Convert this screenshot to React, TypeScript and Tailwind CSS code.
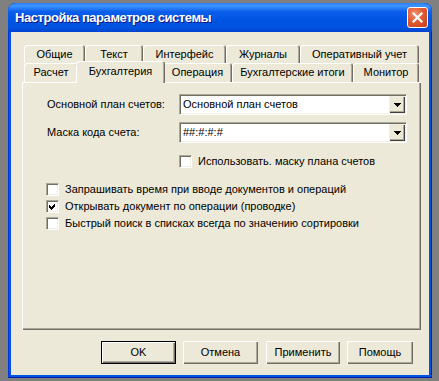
import React from 'react';

const font = { fontFamily: '"Liberation Sans", "DejaVu Sans", sans-serif' };

const tabBevel =
  'bg-[#ece9d8] rounded-t-[3px] shadow-[inset_1px_1px_0_#ffffff,inset_-1px_0_0_#716f64,inset_-2px_0_0_#aca899]';

const Tab = ({ label, w, active = false }: { label: string; w: string; active?: boolean }) => (
  <div
    className={`${tabBevel} ${w} flex items-center justify-center text-[11px] text-black ${
      active ? 'relative z-10 -mx-[2px] h-[22px] -mb-[1px] pb-[2px]' : 'h-full'
    }`}
  >
    {label}
  </div>
);

const Combo = ({ value }: { value: string }) => (
  <div className="w-[228px] h-[21px] bg-white flex items-center border border-t-[#aca899] border-l-[#aca899] border-r-white border-b-white shadow-[inset_1px_1px_0_#716f64,inset_-1px_-1px_0_#f1efe2]">
    <span className="flex-1 pl-[3px] text-[11px] text-black leading-none">{value}</span>
    <div className="w-[16px] h-[17px] mr-[1px] bg-[#ece9d8] flex items-center justify-center shadow-[inset_1px_1px_0_#f1efe2,inset_-1px_-1px_0_#404040,inset_-2px_-2px_0_#aca899]">
      <svg width="7" height="4" viewBox="0 0 7 4" shapeRendering="crispEdges">
        <polygon points="0,0 7,0 3.5,4" fill="#000" />
      </svg>
    </div>
  </div>
);

const Check = ({ label, checked = false }: { label: string; checked?: boolean }) => (
  <div className="flex items-center h-[13px]">
    <div className="w-[13px] h-[13px] bg-white border border-t-[#aca899] border-l-[#aca899] border-r-white border-b-white shadow-[inset_1px_1px_0_#716f64,inset_-1px_-1px_0_#f1efe2] flex items-center justify-center">
      {checked && (
        <svg width="11" height="11" viewBox="0 0 11 11" shapeRendering="crispEdges">
          <polygon points="2,4 4,6 8,2 8,5 4,9 2,7" fill="#000" />
        </svg>
      )}
    </div>
    <span className="ml-[6px] text-[11px] text-black">{label}</span>
  </div>
);

const Btn = ({ label, w, def = false }: { label: string; w: string; def?: boolean }) => (
  <div
    className={`${w} h-[23px] flex items-center justify-center text-[11px] text-black bg-[#ece9d8] ${
      def
        ? 'border border-black shadow-[inset_1px_1px_0_#ffffff,inset_-1px_-1px_0_#716f64,inset_-2px_-2px_0_#aca899]'
        : 'shadow-[inset_1px_1px_0_#ffffff,inset_-1px_-1px_0_#716f64,inset_-2px_-2px_0_#aca899]'
    }`}
  >
    {label}
  </div>
);

export default function App() {
  return (
    <div className="w-[439px] h-[381px] bg-[#808080] pt-[3px] pl-[8px]" style={font}>
      <div className="w-[424px] h-[375px] flex flex-col rounded-t-[8px] overflow-hidden bg-[#0054e3] shadow-[inset_1px_0_0_#0831d9,inset_-1px_0_0_#001ea0,inset_0_-1px_0_#001ea0]">
        {/* title bar */}
        <div className="h-[29px] flex items-center pl-[7px] pr-[4px] bg-[linear-gradient(180deg,#2b7cf5_0%,#3d95ff_10%,#0a5eeb_30%,#0054e3_60%,#0052df_85%,#0043cf_100%)]">
          <span className="text-white text-[13px] font-bold tracking-[-0.45px] [text-shadow:1px_1px_0_#0a1883]">
            Настройка параметров системы
          </span>
          <div className="ml-auto w-[21px] h-[21px] rounded-[3px] border border-white bg-[radial-gradient(circle_at_35%_30%,#f0916c_0%,#e25a32_45%,#c4401a_100%)] flex items-center justify-center">
            <svg width="11" height="11" viewBox="0 0 11 11">
              <path d="M1.5 1.5 L9.5 9.5 M9.5 1.5 L1.5 9.5" stroke="#fff" strokeWidth="2.2" strokeLinecap="square" />
            </svg>
          </div>
        </div>

        {/* client area */}
        <div className="flex-1 mx-[3px] mb-[3px] bg-[#ece9d8] flex flex-col pt-[13px] pl-[11px]">
          <div className="w-[399px]">
            <div className="h-[18px] flex pl-[2px]">
              <Tab label="Общие" w="w-[61px]" />
              <Tab label="Текст" w="w-[58px]" />
              <Tab label="Интерфейс" w="w-[83px]" />
              <Tab label="Журналы" w="w-[74px]" />
              <Tab label="Оперативный учет" w="w-[119px]" />
            </div>
            <div className="h-[19px] flex items-end pl-[2px]">
              <div className="h-full flex"><Tab label="Расчет" w="w-[54px]" /></div>
              <Tab label="Бухгалтерия" w="w-[89px]" active />
              <div className="h-full flex">
                <Tab label="Операция" w="w-[69px]" />
                <Tab label="Бухгалтерские итоги" w="w-[121px]" />
                <Tab label="Монитор" w="w-[66px]" />
              </div>
            </div>

            {/* panel */}
            <div className="h-[248px] bg-[#ece9d8] shadow-[inset_1px_1px_0_#ffffff,inset_-1px_-1px_0_#716f64,inset_-2px_-2px_0_#aca899] pt-[12px] pl-[24px] flex flex-col">
              <div className="flex items-center">
                <span className="w-[133px] pl-[1px] text-[11px] text-black">Основной план счетов:</span>
                <Combo value="Основной план счетов" />
              </div>
              <div className="flex items-center mt-[7px]">
                <span className="w-[133px] pl-[1px] text-[11px] text-black">Маска кода счета:</span>
                <Combo value="##:#:#:#" />
              </div>
              <div className="mt-[12px] pl-[133px]">
                <Check label="Использовать. маску плана счетов" />
              </div>
              <div className="mt-[15px] flex flex-col gap-[4px]">
                <Check label="Запрашивать время при вводе документов и операций" />
                <Check label="Открывать документ по операции (проводке)" checked />
                <Check label="Быстрый поиск в списках всегда по значению сортировки" />
              </div>
            </div>

            {/* buttons */}
            <div className="mt-[11px] flex pl-[79px]">
              <Btn label="OK" w="w-[75px]" def />
              <div className="ml-[7px]"><Btn label="Отмена" w="w-[75px]" /></div>
              <div className="ml-[8px]"><Btn label="Применить" w="w-[74px]" /></div>
              <div className="ml-[7px]"><Btn label="Помощь" w="w-[66px]" /></div>
            </div>
          </div>
        </div>
      </div>
    </div>
  );
}
